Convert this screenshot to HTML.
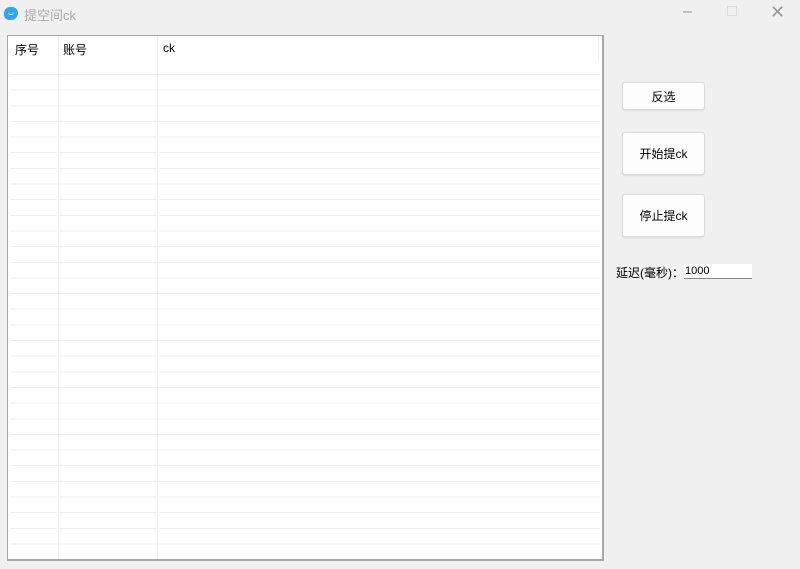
<!DOCTYPE html>
<html><head><meta charset="utf-8"><style>
*{margin:0;padding:0;box-sizing:border-box}
body{width:800px;height:569px;background:#f0f0f0;position:relative;overflow:hidden;font-family:"Liberation Sans","Noto Sans CJK SC",sans-serif;font-size:12px;color:#000}
.title{position:absolute;left:24px;top:5px;font-size:13px;color:#aaa}
.icon{position:absolute;left:4px;top:7px;width:14px;height:13px;background:#2ea7f0;border-radius:6px 6px 7px 5px}
.icon:after{content:"";position:absolute;left:4px;top:4px;width:6px;height:3px;border-bottom:1.5px solid #fff;border-radius:0 0 4px 4px}
.ctl{position:absolute;top:4px;color:#999;font-size:16px}
.tbl{position:absolute;left:7px;top:35px;width:597px;height:526px;background:#fff;border:1px solid #a8a8a8;border-right:2px solid #a8a8a8;border-bottom:2px solid #a8a8a8}
.rows{position:absolute;left:2px;top:38px;width:590px;height:480px;background:repeating-linear-gradient(to bottom,#efefef 0,#efefef 1px,transparent 1px,transparent 15.65px)}
.vl{position:absolute;top:0;bottom:0;width:1px;background:#f2f2f2}
.h{position:absolute;top:5px;font-size:12px}
.btn{position:absolute;left:622px;width:83px;background:#fdfdfd;border:1px solid #dcdcdc;border-radius:3px;text-align:center;font-size:12px;box-shadow:0 1px 1px #ddd}
.lbl{position:absolute;left:616px;top:264px;font-size:12px}
.inp{position:absolute;left:684px;top:264px;width:68px;height:15px;background:#fff;border-bottom:1px solid #888;font-size:11px;padding-left:1px;line-height:15px}
</style></head><body>
<div class="icon"></div>
<div class="title">提空间ck</div>
<div class="ctl" style="left:683px;top:3px">–</div>
<div class="ctl" style="left:727px;top:6px;width:10px;height:10px;border:1px solid #ddd"></div>
<div class="ctl" style="left:770px;top:2px;font-size:18px">✕</div>
<div class="tbl">
 <div class="rows"></div>
 <div class="vl" style="left:50px"></div>
 <div class="vl" style="left:149px"></div>
 <div class="vl" style="left:590px;top:0;height:24px"></div>
 <div class="h" style="left:7px">序号</div>
 <div class="h" style="left:55px">账号</div>
 <div class="h" style="left:155px">ck</div>
</div>
<div class="btn" style="top:82px;height:28px;line-height:28px">反选</div>
<div class="btn" style="top:132px;height:43px;line-height:43px">开始提ck</div>
<div class="btn" style="top:194px;height:43px;line-height:43px">停止提ck</div>
<div class="lbl">延迟(毫秒)：</div>
<div class="inp">1000</div>
</body></html>
